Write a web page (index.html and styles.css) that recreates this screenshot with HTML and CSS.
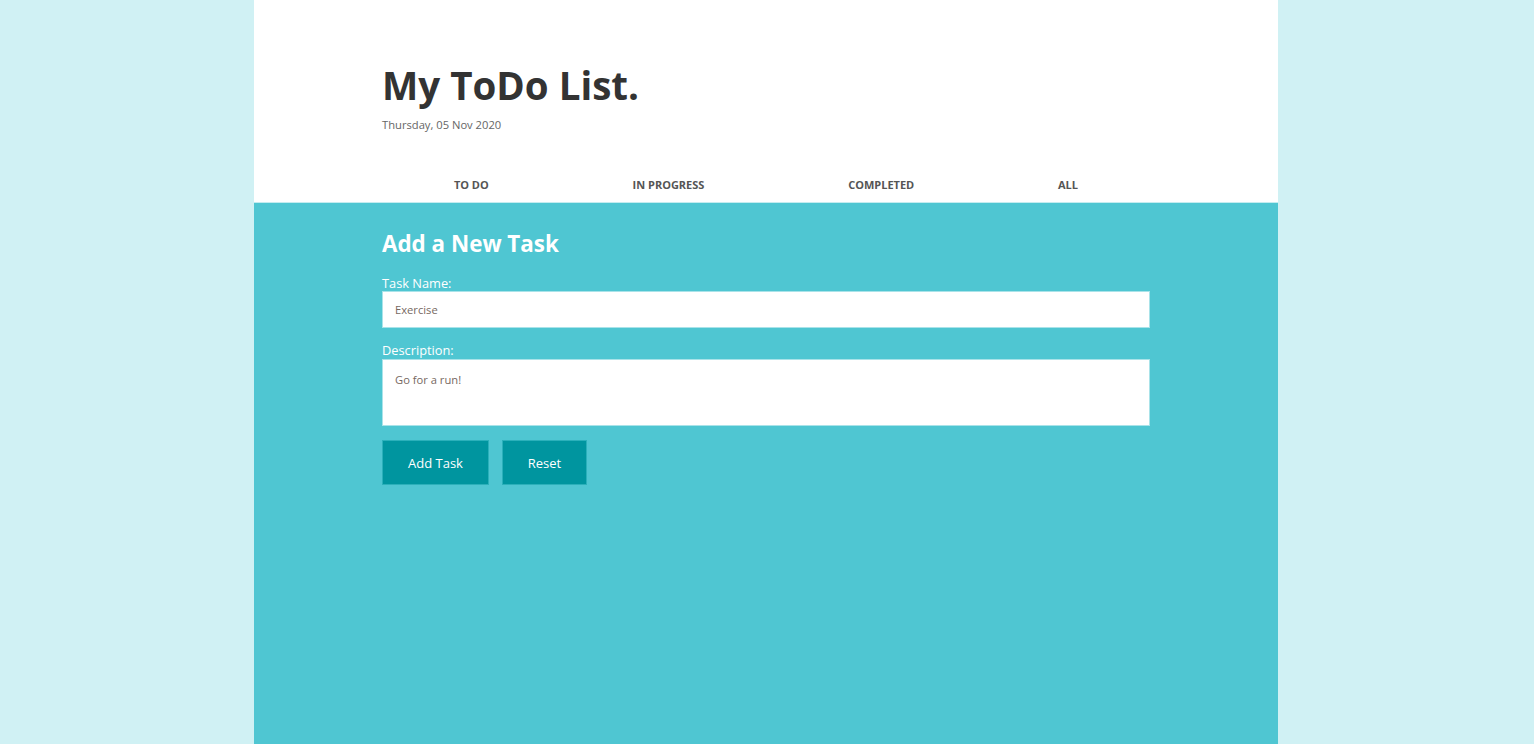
FILE: index.html
```html
<!DOCTYPE html>
<html lang="en">
<head>
<meta charset="utf-8">
<title>My ToDo List</title>
<link rel="stylesheet" href="styles.css">
</head>
<body>
<div class="app">
  <header class="header">
    <h1 class="title">My ToDo List.</h1>
    <p class="date">Thursday, 05 Nov 2020</p>
    <nav class="tabs">
      <a class="tab">TO DO</a>
      <a class="tab">IN PROGRESS</a>
      <a class="tab">COMPLETED</a>
      <a class="tab">ALL</a>
    </nav>
  </header>
  <main class="panel">
    <h2 class="panel-title">Add a New Task</h2>
    <form class="form">
      <label class="label" for="name">Task Name:</label>
      <input class="input" id="name" type="text" value="Exercise">
      <label class="label label-gap" for="desc">Description:</label>
      <textarea class="textarea" id="desc">Go for a run!</textarea>
      <div class="actions">
        <button type="button" class="btn btn-add">Add Task</button>
        <button type="button" class="btn btn-reset">Reset</button>
      </div>
    </form>
  </main>
</div>
</body>
</html>
```
FILE: styles.css
```css
* { box-sizing: border-box; }
html, body { height: 100%; }
body {
  margin: 0;
  background: #d0f1f4;
  font-family: "Open Sans", "Noto Sans", sans-serif;
}
.app {
  width: 1024px;
  margin: 0 auto 0 calc(50% - 513px);
  min-height: 100%;
  background: #ffffff;
  display: flex;
  flex-direction: column;
}
.header {
  padding: 58px 128px 0;
}
.title {
  margin: 0;
  font-size: 38.5px;
  font-weight: 700;
  line-height: 54px;
  color: #333333;
}
.date {
  margin: 5px 0 0;
  font-size: 11.2px;
  line-height: 16px;
  color: #666666;
}
.tabs {
  display: flex;
  justify-content: space-around;
  margin-top: 44px;
  height: 25px;
}
.tab {
  font-size: 11px;
  font-weight: 700;
  color: #555555;
  line-height: 16px;
}
.panel {
  flex: 1;
  background: #4fc6d2;
  border-top: 1px solid #c4ecf0;
  padding: 26px 128px 40px;
}
.panel-title {
  margin: 0;
  font-size: 22.4px;
  line-height: 30px;
  font-weight: 700;
  color: #ffffff;
}
.form {
  display: flex;
  flex-direction: column;
  margin-top: 16px;
}
.label {
  font-size: 12.8px;
  line-height: 16px;
  color: #ffffff;
}
.label-gap { margin-top: 14px; }
.input, .textarea {
  width: 100%;
  border: 1px solid #a9e3e9;
  background: #ffffff;
  font-family: inherit;
  font-size: 11.2px;
  color: #76685f;
  padding: 0 12px;
  outline: none;
  margin: 0;
}
.input {
  height: 37px;
}
.textarea {
  height: 67px;
  margin-top: 1px;
  padding-top: 12px;
  resize: none;
  line-height: 15px;
}
.actions {
  display: flex;
  gap: 13px;
  margin-top: 14px;
}
.btn {
  height: 45px;
  background: #00959f;
  border: 1px solid #2bb0ba;
  color: #ffffff;
  font-family: inherit;
  font-size: 13px;
  padding: 0;
  cursor: pointer;
}
.btn-add { width: 107px; }
.btn-reset { width: 85px; }
```
